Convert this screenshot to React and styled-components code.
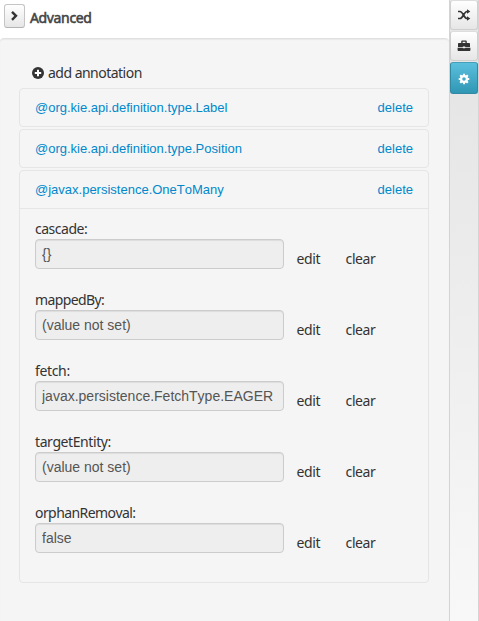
import React from "react";
import styled, { createGlobalStyle } from "styled-components";

const GlobalStyle = createGlobalStyle`
  * { box-sizing: border-box; }
  html, body { margin: 0; padding: 0; overflow: hidden; }
  body { background: #fff; color: #333; font: 14px/20px "Noto Sans", sans-serif; font-kerning: none; }
`;

const Page = styled.div`
  display: flex;
  width: 479px;
  height: 621px;
`;

const Main = styled.main`
  display: flex;
  flex-direction: column;
  width: 449px;
`;

const Header = styled.header`
  display: flex;
  height: 38px;
  padding: 4px 0 0 4px;
  background: #fff;
`;

const CollapseButton = styled.button`
  display: flex;
  align-items: center;
  justify-content: center;
  width: 21px;
  height: 24px;
  padding: 0;
  border: 1px solid #c5c5c5;
  border-bottom-color: #b3b3b3;
  border-radius: 3px;
  background: linear-gradient(#fff, #e6e6e6);
  color: #333;
`;

const Title = styled.h1`
  margin: 4px 0 0 5px;
  font: 14px/20px "Noto Sans", sans-serif;
  letter-spacing: -0.35px;
  color: #444;
  -webkit-text-stroke: 0.55px #444;
`;

const Panel = styled.section`
  flex: 1;
  padding: 24px 20px 0 19px;
  border: 1px solid #e0e0e0;
  border-width: 1px 0 0;
  border-radius: 4px 4px 0 0;
  background: #f5f5f5;
  box-shadow: inset 0 1px 1px rgba(0, 0, 0, 0.05);
`;

const AddAnnotation = styled.div`
  display: flex;
  align-items: center;
  gap: 4px;
  height: 20px;
  margin-bottom: 5px;
  padding-left: 13px;
  letter-spacing: -0.52px;
`;

const Card = styled.article`
  width: 410px;
  height: ${({ $open }) => ($open ? "413px" : "39px")};
  margin-bottom: 2px;
  border: 1px solid #e5e5e5;
  border-radius: 4px;
`;

const CardHeading = styled.div`
  display: flex;
  align-items: center;
  justify-content: space-between;
  height: 37px;
  padding: 0 15px;
`;

const CardLink = styled.a`
  color: #0088cc;
  font: 13px/20px "Liberation Sans", Arial, sans-serif;
  font-kerning: none;
`;

const CardBody = styled.div`
  padding: 10px 15px 0;
  border-top: 1px solid #e5e5e5;
`;

const Field = styled.div`
  display: grid;
  grid-template-columns: 249px 49px auto;
  grid-template-rows: 20px 30px;
  height: 71px;
`;

const FieldLabel = styled.label`
  grid-column: 1 / -1;
  letter-spacing: ${({ $spacing }) => $spacing}px;
`;

const FieldInput = styled.input`
  width: 249px;
  height: 30px;
  padding: 4px 6px;
  border: 1px solid #ccc;
  border-radius: 4px;
  outline: none;
  background: #eee;
  box-shadow: inset 0 1px 1px rgba(0, 0, 0, 0.075);
  color: #555;
  font: 14px/20px "Liberation Sans", Arial, sans-serif;
  font-kerning: none;
`;

const FieldAction = styled.a`
  padding: 10px 0 0 12.6px;
  letter-spacing: -0.42px;
`;

const Rail = styled.aside`
  width: 30px;
  border: 1px solid #d4d4d4;
  border-width: 0 1px;
  background: linear-gradient(#e6e6e6 16%, #f8f8f8);
`;

const RailButton = styled.button`
  display: flex;
  align-items: center;
  justify-content: center;
  width: 28px;
  height: ${({ $height }) => $height}px;
  margin-bottom: 1px;
  padding: ${({ $active }) => ($active ? "2px 0 0" : "0")};
  border: 1px solid ${({ $active }) => ($active ? "#3189a4" : "#cfcfcf")};
  border-top-color: ${({ $active }) => ($active ? "#459fb9" : "#ddd")};
  border-radius: 3px;
  background: ${({ $active }) => ($active ? "linear-gradient(#5bc0de, #2f96b4)" : "linear-gradient(#fff, #e6e6e6)")};
  color: ${({ $active }) => ($active ? "#fff" : "#333")};
`;

const ChevronIcon = () => (
  <svg width="9" height="12" viewBox="0 0 9 12" fill="none" stroke="currentColor" strokeWidth="2.4">
    <path d="M2 1.8 6 5.8 2 9.8" />
  </svg>
);

const PlusIcon = () => (
  <svg width="12" height="12" viewBox="0 0 12 12">
    <circle cx="6" cy="6" r="6" fill="#333" />
    <path d="M6 2.8v6.4M2.8 6h6.4" stroke="#fff" strokeWidth="2" />
  </svg>
);

const ShuffleIcon = () => (
  <svg width="14" height="12" viewBox="0 0 14 12" fill="none" stroke="currentColor" strokeWidth="1.7">
    <path d="M1 2.5h2c3 0 4 7 7 7h1M1 9.5h2c3 0 4-7 7-7h1" />
    <path d="M10 .2 13.3 2.5 10 4.8zM10 7.2 13.3 9.5 10 11.8z" fill="currentColor" stroke="none" />
  </svg>
);

const BriefcaseIcon = () => (
  <svg width="14" height="12" viewBox="0 0 14 12" fill="currentColor">
    <path d="M4.2 3V1.8C4.2 1 4.7.5 5.4.5h3.2c.7 0 1.2.5 1.2 1.3V3H12c.6 0 1 .4 1 1v3.1H8.2v-.6H5.8v.6H1V4c0-.6.4-1 1-1zm1.4 0h2.8V1.8H5.6zM.6 7.7h5.2v.6h2.4v-.6h5.2V10c0 .6-.4 1-1 1H1.6c-.6 0-1-.4-1-1z" />
  </svg>
);

const GearIcon = () => (
  <svg width="12" height="12" viewBox="0 0 12 12" fill="none" stroke="currentColor">
    <circle cx="6" cy="6" r="2.9" strokeWidth="2.2" />
    <path d="M6 .7v2M6 9.3v2M.7 6h2M9.3 6h2M2.2 2.2l1.5 1.5M8.3 8.3l1.5 1.5M9.8 2.2 8.3 3.7M3.7 8.3 2.2 9.8" strokeWidth="2.1" />
  </svg>
);

const FIELDS = [
  { name: "cascade", value: "{}", spacing: -0.48 },
  { name: "mappedBy", value: "(value not set)", spacing: -0.62 },
  { name: "fetch", value: "javax.persistence.FetchType.EAGER", spacing: -0.35 },
  { name: "targetEntity", value: "(value not set)", spacing: -0.42 },
  { name: "orphanRemoval", value: "false", spacing: -0.57 },
];

function Annotation({ name, fields }) {
  return (
    <Card $open={Boolean(fields)}>
      <CardHeading>
        <CardLink>{name}</CardLink>
        <CardLink>delete</CardLink>
      </CardHeading>
      {fields && (
        <CardBody>
          {fields.map((field) => (
            <Field key={field.name}>
              <FieldLabel $spacing={field.spacing}>{field.name}:</FieldLabel>
              <FieldInput readOnly value={field.value} />
              <FieldAction>edit</FieldAction>
              <FieldAction>clear</FieldAction>
            </Field>
          ))}
        </CardBody>
      )}
    </Card>
  );
}

export default function App() {
  return (
    <>
      <GlobalStyle />
      <Page>
        <Main>
          <Header>
            <CollapseButton aria-label="Collapse"><ChevronIcon /></CollapseButton>
            <Title>Advanced</Title>
          </Header>
          <Panel>
            <AddAnnotation><PlusIcon />add annotation</AddAnnotation>
            <Annotation name="@org.kie.api.definition.type.Label" />
            <Annotation name="@org.kie.api.definition.type.Position" />
            <Annotation name="@javax.persistence.OneToMany" fields={FIELDS} />
          </Panel>
        </Main>
        <Rail>
          <RailButton $height={30} aria-label="Shuffle"><ShuffleIcon /></RailButton>
          <RailButton $height={30} aria-label="Toolbox"><BriefcaseIcon /></RailButton>
          <RailButton $height={32} $active aria-label="Settings"><GearIcon /></RailButton>
        </Rail>
      </Page>
    </>
  );
}
